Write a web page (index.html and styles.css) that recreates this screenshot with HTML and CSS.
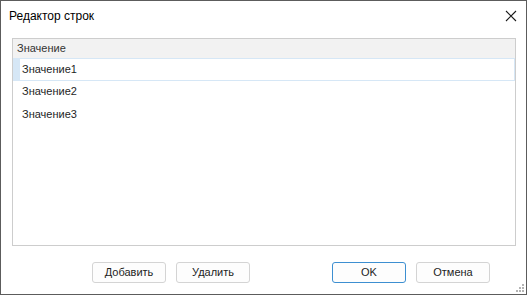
FILE: index.html
```html
<!DOCTYPE html>
<html lang="ru">
  <head>
    <meta charset="UTF-8" />
    <title>Редактор строк</title>
    <link rel="stylesheet" href="styles.css">
  </head>
  <body>
    <div class="window">
      <div class="title-bar">
        <span class="title">Редактор строк</span>
        <svg class="close" width="12" height="12" viewBox="0 0 12 12">
          <path d="M1 1L11 11M11 1L1 11" stroke="#1a1a1a" stroke-width="1.1" fill="none" />
        </svg>
      </div>
      <div class="content">
        <div class="list">
          <div class="list-header">Значение</div>
          <div class="row selected"><div class="cell">Значение1</div></div>
          <div class="row"><div class="cell">Значение2</div></div>
          <div class="row"><div class="cell">Значение3</div></div>
        </div>
      </div>
      <div class="buttons">
        <div class="button-group">
          <button class="btn">Добавить</button>
          <button class="btn">Удалить</button>
        </div>
        <div class="button-group">
          <button class="btn default">OK</button>
          <button class="btn">Отмена</button>
        </div>
      </div>
      <svg class="grip" width="12" height="12" viewBox="0 0 12 12">
        <rect x="9" y="3" width="2" height="2" fill="#b4b4b4" />
        <rect x="6" y="6" width="2" height="2" fill="#b4b4b4" />
        <rect x="9" y="6" width="2" height="2" fill="#b4b4b4" />
        <rect x="3" y="9" width="2" height="2" fill="#b4b4b4" />
        <rect x="6" y="9" width="2" height="2" fill="#b4b4b4" />
        <rect x="9" y="9" width="2" height="2" fill="#b4b4b4" />
      </svg>
    </div>
  </body>
</html>
```

FILE: styles.css
```css
* {
  box-sizing: border-box;
}
body {
  margin: 0;
  font-family: "Liberation Sans", Arial, sans-serif;
  font-size: 11px;
  color: #1e1e1e;
}

.window {
  position: relative;
  width: 527px;
  height: 295px;
  border: 1px solid #5c5c5c;
  background-color: #ffffff;
  display: flex;
  flex-direction: column;
}

.title-bar {
  height: 30px;
  display: flex;
  align-items: center;
  justify-content: space-between;
  padding: 0 9px 1px 8px;
}

.title {
  font-size: 12px;
  color: #000000;
}

.close {
  display: block;
}

.content {
  flex: 1;
  display: flex;
  padding: 7px 10px 0 11px;
}

.list {
  flex: 1;
  border: 1px solid #cdcdcd;
}

.list-header {
  height: 19px;
  line-height: 19px;
  padding-left: 4px;
  background-color: #f2f2f2;
  color: #333333;
}

.row {
  height: 23px;
  padding-left: 7px;
}

.row .cell {
  height: 100%;
  line-height: 21px;
  padding-left: 2px;
}

.row.selected {
  background-color: #d6e7f6;
  padding: 1px 1px 1px 7px;
}

.row.selected .cell {
  background-color: #ffffff;
  line-height: 21px;
}

.buttons {
  height: 48px;
  display: flex;
  justify-content: space-between;
  padding: 16px 36px 0 91px;
}

.button-group {
  display: flex;
  gap: 10px;
}

.btn {
  all: unset;
  box-sizing: border-box;
  width: 74px;
  height: 21px;
  border: 1px solid #d4d4d4;
  border-radius: 3px;
  background-color: #fdfdfd;
  text-align: center;
  line-height: 19px;
  font-family: "Liberation Sans", Arial, sans-serif;
  font-size: 11px;
  color: #1e1e1e;
}

.btn.default {
  border-color: #3d8fd1;
}

.grip {
  position: absolute;
  right: 1px;
  bottom: 1px;
}
```
